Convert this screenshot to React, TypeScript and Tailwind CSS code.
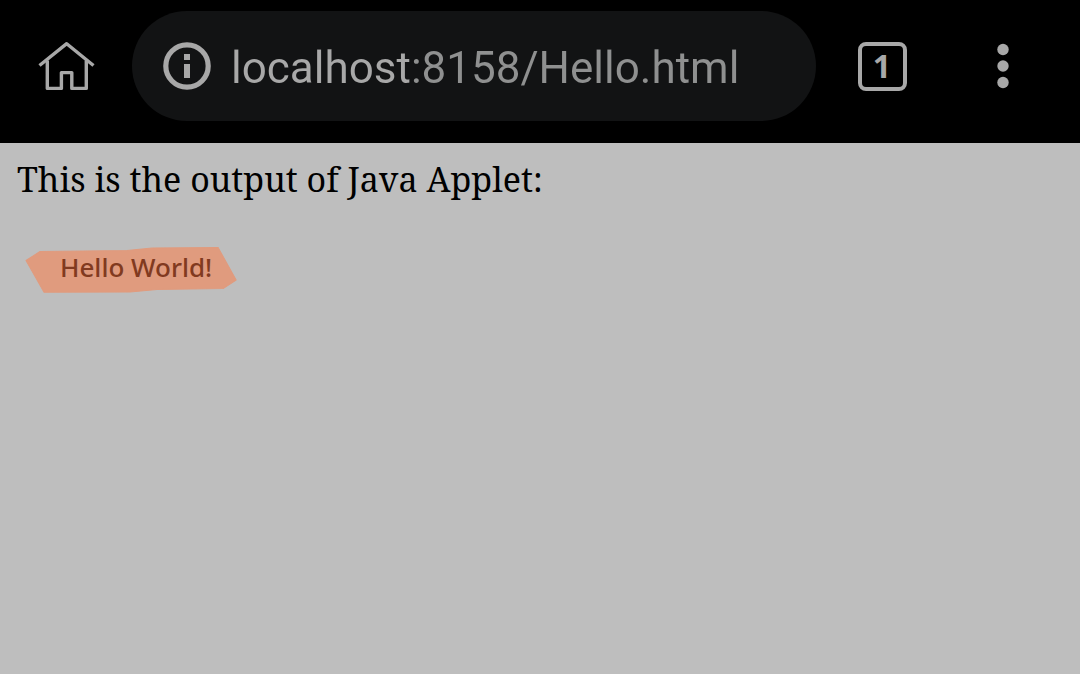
import { useState } from "react";

function HomeIcon() {
  return (
    <svg width="58" height="52" viewBox="0 0 58 52" fill="none" stroke="#a8a8a8" strokeWidth="3.4" aria-hidden="true">
      <path d="M2.5 25.5 L29.7 3.7 L56.5 25.5" strokeLinejoin="round" />
      <path d="M10.3 20.5 V48.4 H24.4 V32.6 H34.8 V48.4 H49.3 V20.5" strokeLinejoin="round" />
    </svg>
  );
}

function InfoIcon() {
  return (
    <svg width="48" height="48" viewBox="0 0 48 48" aria-hidden="true">
      <circle cx="24" cy="24" r="21.2" fill="none" stroke="#a8a8a8" strokeWidth="5.2" />
      <rect x="21" y="12" width="6" height="6" fill="#a8a8a8" />
      <rect x="21" y="22" width="6" height="14" fill="#a8a8a8" />
    </svg>
  );
}

function MenuIcon() {
  return (
    <svg width="12" height="46" viewBox="0 0 12 46" fill="#a8a8a8" aria-hidden="true">
      <circle cx="6" cy="6.5" r="5.7" />
      <circle cx="6" cy="23" r="5.7" />
      <circle cx="6" cy="39.5" r="5.7" />
    </svg>
  );
}

function Highlight() {
  return (
    <svg
      className="absolute inset-0 h-full w-full"
      viewBox="0 0 212 48"
      preserveAspectRatio="none"
      aria-hidden="true"
    >
      <path
        d="M1 15.5 L15 6.5 L102 5.5 L127 3 L193 2.5 L211 35 L198 43.5 L132 44.5 L105 47 L19 47.3 Z"
        fill="#e09b7e"
        stroke="#e09b7e"
        strokeLinejoin="round"
      />
    </svg>
  );
}

function Toolbar() {
  const [url, setUrl] = useState("localhost:8158/Hello.html");
  return (
    <header className="flex items-center bg-black pt-[11px] pr-[22px] pb-[22px]">
      <button type="button" aria-label="Home" className="flex w-[132px] shrink-0 justify-center">
        <HomeIcon />
      </button>
      <div className="flex h-[110px] min-w-0 flex-1 items-center gap-5 rounded-full bg-[#121314] px-[31px]">
        <button type="button" aria-label="Site information" className="shrink-0">
          <InfoIcon />
        </button>
        <input
          type="text"
          aria-label="Address"
          value={url}
          onChange={(e) => setUrl(e.target.value)}
          className="h-16 min-w-0 flex-1 bg-[linear-gradient(90deg,#a8a8a8_180px,#8f9090_180px)] bg-clip-text pt-1 font-[Roboto,sans-serif] text-[44px] text-transparent outline-none"
        />
      </div>
      <button type="button" aria-label="1 open tab" className="flex w-[132px] shrink-0 justify-center">
        <span className="flex size-[49px] items-center justify-center rounded-lg border-4 border-[#a8a8a8] font-['Open_Sans',sans-serif] text-[32px] leading-none font-bold text-[#a8a8a8]">
          1
        </span>
      </button>
      <button type="button" aria-label="Menu" className="flex w-[110px] shrink-0 justify-center">
        <MenuIcon />
      </button>
    </header>
  );
}

export default function App() {
  return (
    <div className="flex min-h-screen flex-col bg-[#bebebe]">
      <Toolbar />
      <main className="flex flex-col items-start gap-[42px] px-[17px] pt-3">
        <p className="font-['Noto_Serif','DejaVu_Serif_Condensed','DejaVu_Serif',serif] text-[34px] leading-[48px] text-black">
          This is the output of Java Applet:
        </p>
        <div className="relative ml-2 pt-[2px] pr-[25px] pb-[6px] pl-[35px]">
          <Highlight />
          <p className="relative font-['Noto_Sans',sans-serif] text-[26px] leading-10 font-medium text-[#813a20]">
            Hello World!
          </p>
        </div>
      </main>
    </div>
  );
}
